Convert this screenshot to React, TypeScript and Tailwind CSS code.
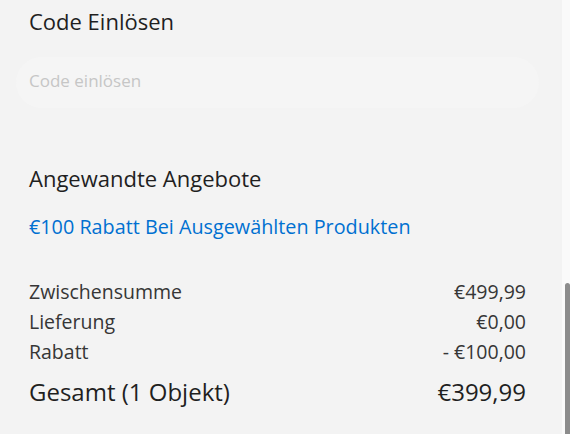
const rows = [
  { label: "Zwischensumme", value: "€499,99" },
  { label: "Lieferung", value: "€0,00" },
  { label: "Rabatt", value: "- €100,00" },
]

const App = () => {
  return (
    <div className="flex h-[434px] w-[570px] overflow-hidden bg-[#fafafa] font-['Open_Sans',sans-serif]">
      <div className="w-[562px] shrink-0 bg-[#f3f3f3] pl-4 pr-[23px] pt-[6px]">
        <h2 className="px-[13px] text-[22px] leading-[30px] text-[#1f1f1f]">Code Einlösen</h2>

        <input
          type="text"
          placeholder="Code einlösen"
          className="mt-[21px] h-[51px] w-full rounded-full bg-[#f5f5f5] px-[13px] pb-1 text-[17px] text-[#1f1f1f] outline-none placeholder:text-[#c6c6c6]"
        />

        <h2 className="mt-[55px] px-[13px] text-[22px] leading-[30px] text-[#1f1f1f]">Angewandte Angebote</h2>

        <p className="mt-[20px] px-[13px] text-[19.8px] leading-[28px] text-[#0070d1]">
          €100 Rabatt Bei Ausgewählten Produkten
        </p>

        <div className="mt-[36px] flex flex-col px-[13px] text-[#363636]">
          {rows.map((row) => (
            <div key={row.label} className="flex items-center justify-between text-[19.5px] leading-[30px]">
              <span>{row.label}</span>
              <span>{row.value}</span>
            </div>
          ))}
          <div className="mt-[8px] flex items-center justify-between text-[24px] leading-[34px] text-[#1f1f1f]">
            <span>Gesamt (1 Objekt)</span>
            <span>€399,99</span>
          </div>
        </div>
      </div>

      <div className="flex w-2 flex-col pt-[283px]">
        <div className="ml-auto h-[160px] w-[5px] rounded-t-[3px] bg-[#8c8c8c]" />
      </div>
    </div>
  )
}

export default App
